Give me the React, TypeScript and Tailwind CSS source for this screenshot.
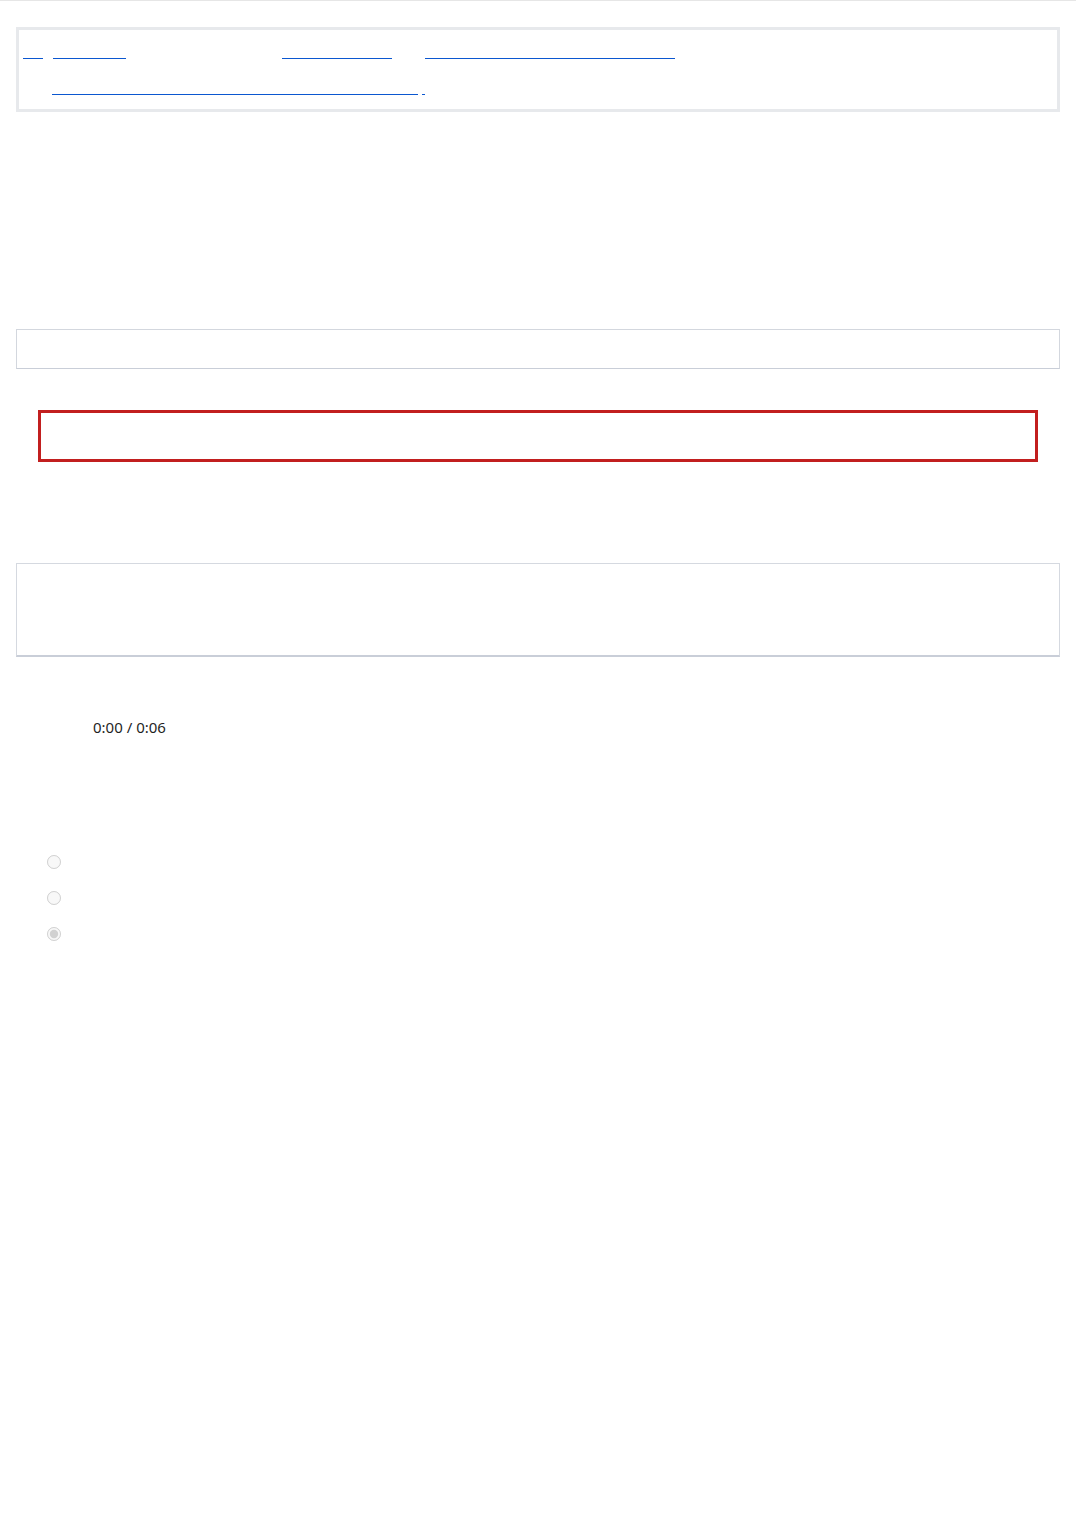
import React from "react";

const Link = ({ w, children }: { w: string; children: React.ReactNode }) => (
  <a
    href="#"
    className={`inline-block ${w} whitespace-nowrap border-b border-[#0b57d0] text-[14px] leading-[20px] text-transparent`}
  >
    {children}
  </a>
);

const Gap = ({ w, children }: { w: string; children: React.ReactNode }) => (
  <span className={`inline-block ${w} whitespace-nowrap text-[14px] leading-[20px] text-transparent`}>{children}</span>
);

export default function App() {
  return (
    <div className="min-h-[1516px] w-full border-t border-[#e6e6e6] bg-white font-['Noto_Sans',sans-serif] text-[#1f1f1f]">
      <div className="px-4 pt-[26px]">
        {/* reference block */}
        <div className="h-[85px] border-[3px] border-[#e7e9ec]">
          <div className="flex h-[29px] items-end pl-1">
            <Link w="w-[20px]">1</Link>
            <Gap w="w-[10px]"> </Gap>
            <Link w="w-[73px]">Source</Link>
            <Gap w="w-[156px]">retrieved from</Gap>
            <Link w="w-[110px]">Archive</Link>
            <Gap w="w-[33px]">at</Gap>
            <Link w="w-[250px]">the original page</Link>
          </div>
          <div className="mt-[18px] flex h-[18px] items-end pl-[33px]">
            <Link w="w-[366px]">Full text of the referenced document</Link>
            <Gap w="w-[4px]"> </Gap>
            <a href="#" className="inline-block w-[3px] border-b border-[#0b57d0] text-[4px] leading-[20px] text-transparent">
              .
            </a>
          </div>
        </div>

        {/* empty field */}
        <div className="mt-[217px] h-[40px] border border-[#d3d7de] border-b-[#c9ced8]" />

        {/* alert box */}
        <div className="mx-[22px] mt-[41px] h-[52px] border-[3px] border-[#c21f1f]" />

        {/* text area */}
        <div className="mt-[101px] h-[94px] border border-b-2 border-[#d5d9e0] border-b-[#c9ced8]" />

        {/* audio player */}
        <div className="mt-[60px] pl-[77px] text-[15px] leading-[20px] text-[#1f1f1f]">0:00 / 0:06</div>

        {/* options */}
        <div className="mt-[118px] flex flex-col gap-[23px] pl-[31px]">
          <label className="flex h-[13px] items-center">
            <input type="radio" name="opt" disabled className="m-0 h-[14px] w-[14px]" />
          </label>
          <label className="flex h-[13px] items-center">
            <input type="radio" name="opt" disabled className="m-0 h-[14px] w-[14px]" />
          </label>
          <label className="flex h-[13px] items-center">
            <input type="radio" name="opt" disabled defaultChecked className="m-0 h-[14px] w-[14px]" />
          </label>
        </div>
      </div>
    </div>
  );
}
